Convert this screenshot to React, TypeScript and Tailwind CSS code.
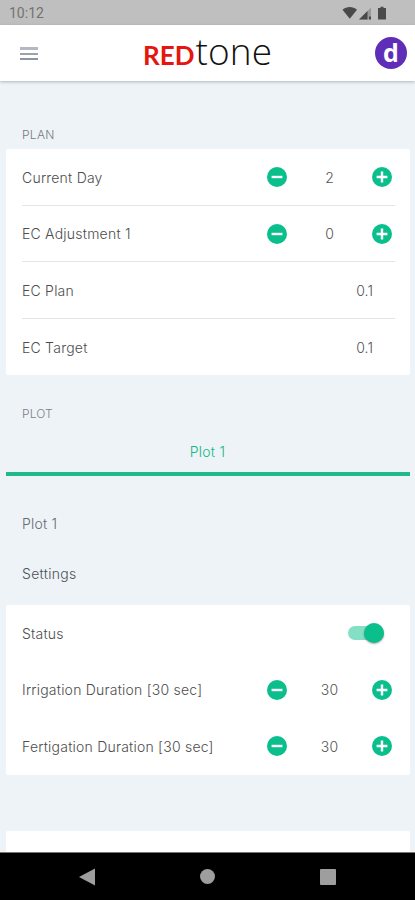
import { useState } from 'react';

const rowCls = "flex h-[56.5px] items-center";
const dividerCls = "border-b border-[#e2e4e6] pt-px";
const labelCls = "flex-1 pt-px text-sm tracking-[0.22px] text-[#4d4d4d]";
const valueCls = "pt-px text-center text-sm tracking-[0.1px] text-[#555555]";

function RoundButton({ kind, label, onClick }: { kind: 'minus' | 'plus'; label: string; onClick: () => void }) {
  return (
    <button aria-label={label} onClick={onClick} className="size-5 shrink-0">
      <svg viewBox="0 0 20 20" className="size-5">
        <circle cx="10" cy="10" r="10" fill="#0bbf8c" />
        <path d={kind === 'plus' ? 'M4.6 10h10.8M10 4.6v10.8' : 'M4.6 10h10.8'} stroke="white" strokeWidth="2.4" />
      </svg>
    </button>
  );
}

function StepperRow({ label, initial, divider }: { label: string; initial: number; divider?: boolean }) {
  const [value, setValue] = useState(initial);
  return (
    <div className={`${rowCls} ${divider ? dividerCls : ''}`}>
      <span className={labelCls}>{label}</span>
      <div className="mr-[3px] flex items-center">
        <RoundButton kind="minus" label={`Decrease ${label}`} onClick={() => setValue(Math.max(0, value - 1))} />
        <span className={`${valueCls} w-[85px]`}>{value}</span>
        <RoundButton kind="plus" label={`Increase ${label}`} onClick={() => setValue(value + 1)} />
      </div>
    </div>
  );
}

function ValueRow({ label, value, divider }: { label: string; value: string; divider?: boolean }) {
  return (
    <div className={`${rowCls} ${divider ? dividerCls : 'pt-px'}`}>
      <span className={labelCls}>{label}</span>
      <span className={`${valueCls} mr-[22px]`}>{value}</span>
    </div>
  );
}

function StatusBar() {
  return (
    <div className="flex h-[25px] items-center justify-between bg-[#bfbfbf] pr-[27px] pl-[9px]">
      <span className="pt-0.5 font-[Roboto] text-[14px] font-normal text-[#737373]">10:12</span>
      <svg width="46" height="14" viewBox="0 0 46 14" fill="#4a4a4a">
        <path d="M.5 3.8C4.6.2 10.9.2 15 3.8L7.8 12.8z" />
        <path d="M17 13.5L29 1.5v12z" fill="#999999" />
        <path d="M17 13.5L25.5 5v8.5z" />
        <path d="M27 10.5h2v3h-2z" />
        <path d="M38.500 .8h3V2h2.500v11.500h-8V2h2.500z" />
      </svg>
    </div>
  );
}

function Header() {
  return (
    <header className="relative z-10 flex h-14 items-center bg-white pr-2 pl-5 shadow-[0_1px_3px_rgba(80,95,110,0.4)]">
      <button aria-label="Menu" className="flex w-[18px] flex-col gap-[3px]">
        <span className="h-[3px] bg-[#b5b8c2]" />
        <span className="h-[2px] bg-[#9ba2ae]" />
        <span className="h-[2px] bg-[#8c95a3]" />
      </button>
      <div className="mb-[5px] ml-[105px] flex flex-1 items-baseline leading-none">
        <span className="font-[Lato] text-[26px] font-bold text-[#e5160f]">RED</span>
        <span className="ml-px font-['Open_Sans'] text-[37px] font-light tracking-[0.1px] text-[#111111]">tone</span>
      </div>
      <div className="flex size-8 items-center justify-center rounded-full bg-[#5f2eb8] font-['Open_Sans'] text-[25px] leading-none font-bold text-white">
        <span className="-mt-0.5">d</span>
      </div>
    </header>
  );
}

function StatusSwitch() {
  const [on, setOn] = useState(true);
  return (
    <button role="switch" aria-checked={on} aria-label="Status" onClick={() => setOn(!on)}
      className={`mr-[11px] flex h-[14px] w-9 items-center rounded-full ${on ? 'justify-end bg-[#85dfc5]' : 'bg-gray-300'}`}>
      <span className={`size-5 shrink-0 rounded-full shadow-[0_1px_2px_rgba(0,0,0,0.35)] ${on ? 'bg-[#0bbf8c]' : 'bg-white'}`} />
    </button>
  );
}

function NavBar() {
  return (
    <nav className="flex h-12 items-center justify-between border-t border-[#777777] bg-black px-[79px]">
      <svg width="16" height="18" viewBox="0 0 16 18" fill="#9e9e9e"><path d="M0 9L16 .5v17z" /></svg>
      <span className="size-[15px] rounded-full bg-[#9e9e9e]" />
      <span className="size-4 rounded-[1px] bg-[#9e9e9e]" />
    </nav>
  );
}

export default function App() {
  return (
    <div className="flex h-[900px] w-[415px] flex-col overflow-hidden bg-[#edf3f7] font-[Inter,sans-serif] font-light">
      <StatusBar />
      <Header />

      <main className="flex-1 overflow-hidden pr-[5px] pl-[6px]">
        <h2 className="mt-[46px] ml-4 h-[22px] text-[12px] leading-4 tracking-[0.3px] text-[#757b80]">PLAN</h2>
        <section className="rounded-[2px] bg-white pr-[15px] pl-4">
          <StepperRow label="Current Day" initial={2} divider />
          <StepperRow label="EC Adjustment 1" initial={0} divider />
          <ValueRow label="EC Plan" value="0.1" divider />
          <ValueRow label="EC Target" value="0.1" />
        </section>

        <h2 className="mt-[31px] ml-4 text-[12px] leading-4 tracking-[0.1px] text-[#7c8287]">PLOT</h2>
        <div className="mt-[9px] flex h-[45px] items-center justify-center border-b-4 border-[#1fb98c] pr-px">
          <span className="text-sm tracking-[0.23px] text-[#17b588]">Plot 1</span>
        </div>

        <p className="mt-[38px] ml-4 text-sm tracking-[0.23px] text-[#666b70]">Plot 1</p>
        <h3 className="mt-[30px] mb-[21px] ml-4 text-sm tracking-[0.3px] text-[#4d5257]">Settings</h3>

        <section className="rounded-[2px] bg-white pr-[15px] pl-4">
          <div className={rowCls}>
            <span className={labelCls}>Status</span>
            <StatusSwitch />
          </div>
          <StepperRow label="Irrigation Duration [30 sec]" initial={30} />
          <StepperRow label="Fertigation Duration [30 sec]" initial={30} />
        </section>

        <section className="mt-14 h-10 rounded-t-[2px] bg-white" />
      </main>

      <NavBar />
    </div>
  );
}
